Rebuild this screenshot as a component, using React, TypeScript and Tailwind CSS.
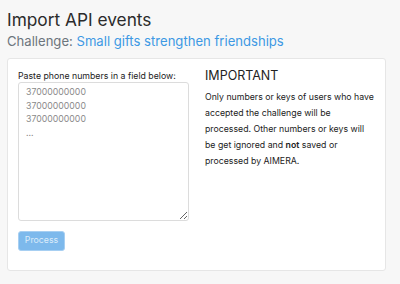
import React from "react";

export default function App() {
  return (
    <div className="min-h-[284px] w-[400px] bg-[#f7f7f7] px-[7px] pt-[9px] text-[#212529]" style={{ fontFamily: "Inter, 'Noto Sans', sans-serif" }}>
      <h1 className="text-[17.3px] leading-[21px] font-normal text-[#2b2b2b]">Import API events</h1>
      <div className="mt-[3px] text-[13.1px] leading-[16px] text-[#6c757d]">
        Challenge: <span className="text-[#3d99e4]">Small gifts strengthen friendships</span>
      </div>
      <div className="mt-[9px] h-[213px] w-[379px] rounded-[3px] border border-[#e6e6e6] bg-white px-[10px] pt-[12px]">
        <div className="flex gap-[16px]">
          <div className="w-[171px] shrink-0">
            <div className="text-[8.75px] leading-[11px] text-[#222]">Paste phone numbers in a field below:</div>
            <textarea
              className="block h-[139px] w-[171px] resize-y rounded-[3px] border border-[#dcdcdc] px-[7px] py-[3px] text-[8.75px] leading-[13.7px] text-[#8a8a8a] outline-none"
              defaultValue={"37000000000\n37000000000\n37000000000\n..."}
            />
            <button className="mt-[10px] h-[20px] w-[47px] rounded-[3px] border border-[#a7cff2] bg-[#7db9ec] text-[8.75px] text-[#dcecfa]">
              Process
            </button>
          </div>
          <div className="w-[172px]">
            <div className="-mt-[1px] text-[12.5px] leading-[12px] text-[#222]">IMPORTANT</div>
            <p className="mt-[7px] text-[8.75px] leading-[16px] text-[#222]">
              Only numbers or keys of users who have accepted the challenge will be processed. Other numbers or keys will be get ignored and <span className="font-semibold">not</span> saved or processed by AIMERA.
            </p>
          </div>
        </div>
      </div>
    </div>
  );
}
